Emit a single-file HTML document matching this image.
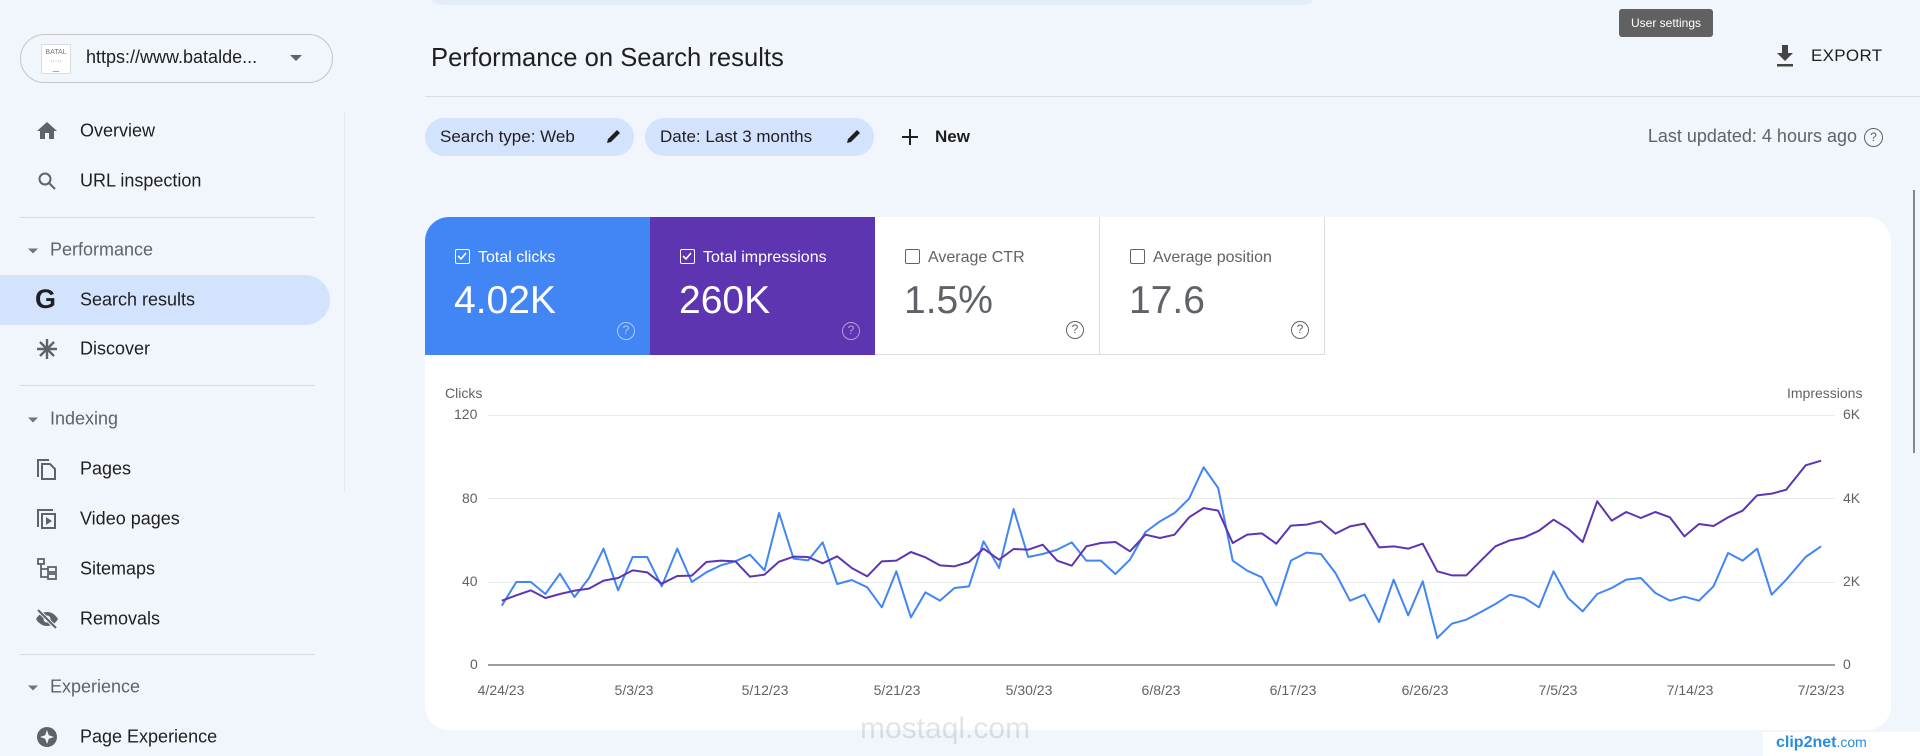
<!DOCTYPE html>
<html><head><meta charset="utf-8"><style>
*{margin:0;padding:0;box-sizing:border-box}
body{width:1920px;height:756px;overflow:hidden;background:#f1f5fc;font-family:"Liberation Sans",Arial,sans-serif;color:#1f1f1f;position:relative}
.a{position:absolute}
.nav{position:absolute;left:80px;font-size:18px;color:#1f1f1f;transform:translateY(-50%)}
.sec{position:absolute;left:50px;font-size:18px;color:#5f6368;transform:translateY(-50%)}
.sec:before{content:"";position:absolute;left:-22px;top:9px;border-left:5px solid transparent;border-right:5px solid transparent;border-top:5px solid #70757a}
.ic{position:absolute;left:35px;width:24px;height:24px;transform:translateY(-50%)}
.div{position:absolute;left:20px;width:295px;height:1px;background:#dadce0}
.chip{position:absolute;top:118px;height:38px;border-radius:19px;background:#d3e3fd;font-size:17px;line-height:38px;padding-left:15px;color:#1f1f1f}
.tile{position:absolute;top:217px;height:138px;width:225px}
.tl{position:absolute;left:30px;top:32px;font-size:16px}
.tl i{display:inline-block;width:15px;height:15px;border:1.5px solid currentColor;border-radius:2px;vertical-align:-2px;margin-right:8px;position:relative}
.tl i svg{position:absolute;left:0;top:0}
.tv{position:absolute;left:29px;top:62px;font-size:39px}
.q{position:absolute;right:15px;bottom:15px;width:18px;height:18px;border:1.6px solid currentColor;border-radius:50%;font-size:12px;text-align:center;line-height:15px}
.yl{position:absolute;font-size:14px;color:#5f6368}
.gl{position:absolute;left:488px;width:1347px;height:1px;background:#e8eaed}
.dl{position:absolute;top:682px;font-size:14px;color:#5f6368;transform:translateX(-50%)}
</style></head><body>
<div class="a" style="left:429px;top:-20px;width:887px;height:25px;border-radius:14px;background:#e5ecfb"></div>
<div class="a" style="left:20px;top:34px;width:313px;height:49px;border:1px solid #c4c7c5;border-radius:25px"></div>
<div class="a" style="left:41px;top:44px;width:30px;height:30px;background:#fff;border:1px solid #ddd;font-size:7px;color:#777;text-align:center;line-height:9px;padding-top:3px">BATAL<br>·····<br>ـــ</div>
<div class="a" style="left:86px;top:47px;font-size:18px">https://www.batalde...</div>
<div class="a" style="left:290px;top:55px;border-left:6px solid transparent;border-right:6px solid transparent;border-top:6px solid #5f6368"></div>
<div class="a" style="left:344px;top:111px;width:1px;height:380px;background:#e3e6ea"></div>
<svg class="ic" style="top:131px" viewBox="0 0 24 24"><path d="M10 20v-6h4v6h5v-8h3L12 3 2 12h3v8z" fill="#5f6368"/></svg>
<div class="nav" style="top:131px">Overview</div>
<svg class="ic" style="top:181px" viewBox="0 0 24 24"><circle cx="10" cy="10" r="5.5" fill="none" stroke="#5f6368" stroke-width="2"/><path d="M14 14l6 6" stroke="#5f6368" stroke-width="2"/></svg>
<div class="nav" style="top:181px">URL inspection</div>
<div class="div" style="top:217px"></div>
<div class="sec" style="top:250px">Performance</div>
<div class="a" style="left:0;top:275px;width:330px;height:50px;background:#d3e3fd;border-radius:0 25px 25px 0"></div>
<div class="a" style="left:35px;top:286px;font-size:27px;font-weight:bold;color:#1f1f1f;line-height:27px">G</div>
<div class="nav" style="top:300px">Search results</div>
<svg class="ic" style="top:349px" viewBox="0 0 24 24"><path d="M12 2v20M2 12h20M5 5l14 14M19 5L5 19" stroke="#5f6368" stroke-width="2.4"/></svg>
<div class="nav" style="top:349px">Discover</div>
<div class="div" style="top:385px"></div>
<div class="sec" style="top:419px">Indexing</div>
<svg class="ic" style="top:469px" viewBox="0 0 24 24"><path d="M3 20V3h11" fill="none" stroke="#5f6368" stroke-width="2"/><path d="M7 7h8l5 5v10H7z" fill="none" stroke="#5f6368" stroke-width="2"/></svg>
<div class="nav" style="top:469px">Pages</div>
<svg class="ic" style="top:519px" viewBox="0 0 24 24"><path d="M3 20V3h15" fill="none" stroke="#5f6368" stroke-width="2"/><rect x="7" y="7" width="13" height="14" fill="none" stroke="#5f6368" stroke-width="2"/><path d="M11 10v8l6-4z" fill="#5f6368"/></svg>
<div class="nav" style="top:519px">Video pages</div>
<svg class="ic" style="top:569px" viewBox="0 0 24 24"><rect x="3" y="2" width="6" height="5" fill="none" stroke="#5f6368" stroke-width="1.8"/><rect x="13" y="10" width="8" height="5" fill="none" stroke="#5f6368" stroke-width="1.8"/><rect x="13" y="17" width="8" height="5" fill="none" stroke="#5f6368" stroke-width="1.8"/><path d="M6 7v13h7M6 12h7" fill="none" stroke="#5f6368" stroke-width="1.8"/></svg>
<div class="nav" style="top:569px">Sitemaps</div>
<svg class="ic" style="top:619px" viewBox="0 0 24 24"><path d="M1 12c3-5 7-7 11-7s8 2 11 7c-3 5-7 7-11 7S4 17 1 12z" fill="#5f6368"/><circle cx="12" cy="12" r="3.5" fill="#f1f5fc"/><path d="M3 3l18 18" stroke="#f1f5fc" stroke-width="4"/><path d="M3 3l18 18" stroke="#5f6368" stroke-width="2"/></svg>
<div class="nav" style="top:619px">Removals</div>
<div class="div" style="top:654px"></div>
<div class="sec" style="top:687px">Experience</div>
<svg class="ic" style="top:737px" viewBox="0 0 24 24"><circle cx="12" cy="12" r="10" fill="#5f6368"/><path d="M12 5l1.8 5.2L19 12l-5.2 1.8L12 19l-1.8-5.2L5 12l5.2-1.8z" fill="#f1f5fc"/></svg>
<div class="nav" style="top:737px">Page Experience</div>
<div class="a" style="left:431px;top:44px;font-size:25.6px;color:#1f1f1f">Performance on Search results</div>
<div class="a" style="left:425px;top:96px;width:1495px;height:1px;background:#dadce0"></div>
<div class="a" style="left:1619px;top:9px;width:94px;height:28px;background:#616161;border-radius:3px;color:#fff;font-size:12px;line-height:28px;text-align:center">User settings</div>
<svg class="a" style="left:1774px;top:44px" width="22" height="24" viewBox="0 0 22 24"><path d="M8 1h6v8h5l-8 8-8-8h5z" fill="#444"/><rect x="3" y="20" width="16" height="2.5" fill="#444"/></svg>
<div class="a" style="left:1811px;top:46px;font-size:17px;color:#1f1f1f;letter-spacing:.3px">EXPORT</div>
<div class="chip" style="left:425px;width:209px">Search type: Web</div>
<div class="chip" style="left:645px;width:229px">Date: Last 3 months</div>
<svg class="a" style="left:605px;top:127px" width="18" height="18" viewBox="0 0 18 18"><path d="M2 16l1-4 9-9 3 3-9 9z" fill="#1f1f1f"/></svg>
<svg class="a" style="left:845px;top:127px" width="18" height="18" viewBox="0 0 18 18"><path d="M2 16l1-4 9-9 3 3-9 9z" fill="#1f1f1f"/></svg>
<svg class="a" style="left:901px;top:128px" width="18" height="18" viewBox="0 0 18 18"><path d="M9 1v16M1 9h16" stroke="#1f1f1f" stroke-width="2"/></svg>
<div class="a" style="left:935px;top:127px;font-size:17px;font-weight:bold">New</div>
<div class="a" style="right:63px;top:126px;font-size:18px;color:#5f6368">Last updated: 4 hours ago</div>
<div class="a" style="left:1864px;top:128px;width:19px;height:19px;border:1.6px solid #5f6368;border-radius:50%;font-size:12px;text-align:center;line-height:16px;color:#5f6368">?</div>
<div class="a" style="left:1913px;top:190px;width:2px;height:263px;background:#888"></div>
<div class="a" style="left:425px;top:217px;width:1466px;height:513px;background:#fff;border-radius:24px;overflow:hidden">
<div class="tile" style="left:0;top:0;background:#4285f4;color:#fff"><div class="tl"><i><svg width="12" height="12" viewBox="0 0 12 12"><path d="M2 6l3 3 5-6" fill="none" stroke="#fff" stroke-width="1.6"/></svg></i>Total clicks</div><div class="tv">4.02K</div><div class="q" style="color:#aecbfa">?</div></div>
<div class="tile" style="left:225px;top:0;background:#5e35b1;color:#fff"><div class="tl"><i><svg width="12" height="12" viewBox="0 0 12 12"><path d="M2 6l3 3 5-6" fill="none" stroke="#fff" stroke-width="1.6"/></svg></i>Total impressions</div><div class="tv">260K</div><div class="q" style="color:#b39ddb">?</div></div>
<div class="tile" style="left:450px;top:0;color:#5f6368;border-right:1px solid #dadce0;border-bottom:1px solid #dadce0"><div class="tl"><i></i>Average CTR</div><div class="tv">1.5%</div><div class="q">?</div></div>
<div class="tile" style="left:675px;top:0;color:#5f6368;border-right:1px solid #dadce0;border-bottom:1px solid #dadce0"><div class="tl"><i></i>Average position</div><div class="tv">17.6</div><div class="q">?</div></div>
</div>
<div class="yl" style="left:445px;top:385px">Clicks</div>
<div class="yl" style="left:1787px;top:385px">Impressions</div>
<div class="gl" style="top:415px"></div><div class="gl" style="top:498px"></div><div class="gl" style="top:582px"></div>
<div class="gl" style="top:664px;background:#9aa0a6;height:1.5px"></div>
<div class="yl" style="left:454px;top:406px">120</div><div class="yl" style="left:462px;top:490px">80</div><div class="yl" style="left:462px;top:573px">40</div><div class="yl" style="left:470px;top:656px">0</div>
<div class="yl" style="left:1843px;top:406px">6K</div><div class="yl" style="left:1843px;top:490px">4K</div><div class="yl" style="left:1843px;top:573px">2K</div><div class="yl" style="left:1843px;top:656px">0</div>
<div class="dl" style="left:501px">4/24/23</div><div class="dl" style="left:634px">5/3/23</div><div class="dl" style="left:765px">5/12/23</div><div class="dl" style="left:897px">5/21/23</div><div class="dl" style="left:1029px">5/30/23</div><div class="dl" style="left:1161px">6/8/23</div><div class="dl" style="left:1293px">6/17/23</div><div class="dl" style="left:1425px">6/26/23</div><div class="dl" style="left:1558px">7/5/23</div><div class="dl" style="left:1690px">7/14/23</div><div class="dl" style="left:1821px">7/23/23</div>
<svg class="a" style="left:400px;top:378px" width="1520" height="378" viewBox="0 0 1568 1134" preserveAspectRatio="none">
<polyline fill="none" stroke="#4285f4" stroke-width="2" vector-effect="non-scaling-stroke" stroke-linejoin="round" points="105,683 120,612 135,612 150,648 165,587 180,657 195,600 210,512 225,637 240,537 255,537 270,625 286,512 301,612 316,583 331,562 346,550 361,530 376,577 391,405 406,542 421,547 436,493 451,618 466,606 482,628 497,688 512,580 527,718 542,643 557,668 572,630 587,625 602,490 618,570 633,393 648,537 663,528 678,515 693,493 708,548 723,548 738,588 753,545 769,462 784,430 799,405 814,362 829,268 844,330 859,548 874,578 889,598 904,682 919,548 935,524 950,528 965,585 980,668 995,650 1010,732 1025,605 1040,712 1055,610 1070,780 1085,737 1100,725 1115,702 1130,678 1145,650 1160,660 1175,688 1190,580 1205,660 1220,700 1235,648 1250,630 1265,605 1280,600 1295,645 1310,668 1325,656 1340,668 1355,625 1370,525 1385,548 1400,512 1415,650 1430,605 1450,537 1466,505"/>
<polyline fill="none" stroke="#5e35b1" stroke-width="2" vector-effect="non-scaling-stroke" stroke-linejoin="round" points="105,668 120,652 135,637 150,660 165,648 180,638 195,632 210,608 225,600 240,577 255,583 270,617 286,594 301,593 316,552 331,548 346,550 361,596 376,590 391,551 406,536 421,537 436,556 451,535 466,570 482,595 497,550 512,548 527,522 542,538 557,562 572,565 587,552 602,512 618,545 633,513 648,515 663,500 678,548 693,563 708,505 723,495 738,492 753,520 769,470 784,480 799,470 814,418 829,390 844,398 859,495 874,470 889,466 904,497 919,443 935,440 950,430 965,467 980,445 995,437 1010,508 1025,505 1040,512 1055,497 1070,580 1085,592 1100,592 1115,548 1130,505 1145,487 1160,478 1175,458 1190,425 1205,452 1220,492 1235,370 1250,428 1265,402 1280,420 1295,402 1310,418 1325,475 1340,438 1355,444 1370,418 1385,398 1400,352 1415,347 1430,335 1450,262 1466,248"/>
</svg>
<div class="a" style="left:860px;top:712px;font-size:30px;color:#000;opacity:.1">mostaql.com</div>
<div class="a" style="left:1763px;top:732px;width:157px;height:24px;background:#fff"></div>
<div class="a" style="left:1776px;top:734px;font-size:16px;color:#2a8be0;font-weight:bold">clip2net<span style="font-weight:normal;font-size:14px">.com</span></div>
</body></html>
